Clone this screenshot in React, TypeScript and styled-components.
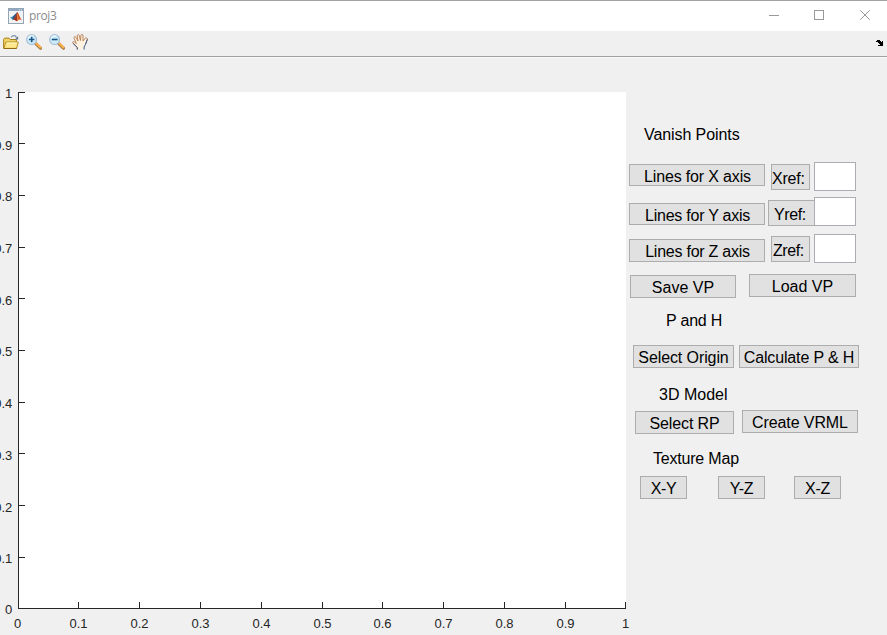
import React from 'react';
import styled, { createGlobalStyle } from 'styled-components';

const Global = createGlobalStyle`
  * { box-sizing: border-box; }
  html, body { margin: 0; padding: 0; background: #f0f0f0; overflow: hidden; }
`;

const Window = styled.div`
  width: 887px;
  height: 635px;
  display: flex;
  flex-direction: column;
  background: #f0f0f0;
  color: #000;
  font-family: "Liberation Sans", Arial, sans-serif;
  overflow: hidden;
`;

const TitleBar = styled.header`
  height: 31px;
  flex: none;
  display: flex;
  align-items: center;
  background: #fff;
  border-top: 1px solid #a3a3a3;
  padding-left: 8px;
`;

const Title = styled.span`
  margin-left: 5px;
  flex: 1;
  font: 12px/16px "Open Sans", "Noto Sans", sans-serif;
  letter-spacing: -0.4px;
  color: #8c8c8c;
`;

const Controls = styled.svg`
  width: 127px;
  height: 30px;
  display: block;
`;

const Toolbar = styled.nav`
  height: 27px;
  flex: none;
  display: flex;
  align-items: flex-start;
  padding: 3px 3px 0 3px;
  border-bottom: 1px solid #f9f9f9;
  box-shadow: inset 0 -1px 0 #a0a0a0;
`;

const ToolIcon = styled.svg<{ $gap?: number }>`
  width: 16px;
  height: 16px;
  display: block;
  flex: none;
  margin-right: ${p => p.$gap ?? 7}px;
`;

const DockIcon = styled.svg`
  width: 8px;
  height: 7px;
  display: block;
  margin: 6px 0 0 auto;
`;

const Body = styled.main`
  flex: 1;
  display: flex;
  min-height: 0;
`;

const Chart = styled.svg`
  width: 628px;
  height: 577px;
  flex: none;
  display: block;
  overflow: visible;
  font: 13px "Liberation Sans", Arial, sans-serif;
`;

const Panel = styled.section`
  flex: 1;
  display: flex;
  flex-direction: column;
`;

const Row = styled.div<{ $h: number; $indent: number; $top?: number }>`
  display: flex;
  flex: none;
  align-items: flex-start;
  height: ${p => p.$h}px;
  margin-top: ${p => p.$top ?? 0}px;
  padding-left: ${p => p.$indent}px;
`;

const Heading = styled.h2<{ $w: number; $indent: number; $top: number; $track?: number }>`
  margin: ${p => p.$top}px 0 0 ${p => p.$indent}px;
  width: ${p => p.$w}px;
  flex: none;
  font-size: 16px;
  line-height: 18px;
  font-weight: 400;
  letter-spacing: ${p => p.$track ?? 0}px;
  white-space: nowrap;
`;

const Push = styled.button<{ $w: number; $h?: number; $gap?: number; $drop?: number; $track?: number; $nudge?: number }>`
  width: ${p => p.$w}px;
  height: ${p => p.$h ?? 23}px;
  flex: none;
  display: flex;
  justify-content: center;
  align-items: flex-start;
  margin: ${p => p.$drop ?? 0}px 0 0 ${p => p.$gap ?? 0}px;
  padding: 3px 0 0 ${p => p.$nudge ?? 0}px;
  border: 1px solid #adadad;
  border-radius: 0;
  background: #e1e1e1;
  color: #000;
  font: 16px/18px "Liberation Sans", Arial, sans-serif;
  letter-spacing: ${p => p.$track ?? 0}px;
  white-space: nowrap;
`;

const RefLabel = styled(Push)`
  height: 26px;
  justify-content: flex-start;
  padding-top: 5px;
`;

const Field = styled.input<{ $gap?: number }>`
  width: 42px;
  height: 29px;
  flex: none;
  margin: 0 0 0 ${p => p.$gap ?? 4}px;
  padding: 0 4px;
  border: 1px solid #abadb3;
  border-radius: 0;
  background: #fff;
  font: 16px "Liberation Sans", Arial, sans-serif;
  outline: none;
`;

const X_TICKS = [18, 78, 139, 200, 261, 322, 382, 443, 504, 565, 625];
const Y_TICKS = [608, 557, 505, 453, 402, 350, 298, 247, 195, 143, 92];
const Y_BASELINES = [614, 563, 512, 460, 408, 356, 305, 253, 201, 150, 98];
const LABELS = ['0', '0.1', '0.2', '0.3', '0.4', '0.5', '0.6', '0.7', '0.8', '0.9', '1'];

function Axes() {
  return (
    <Chart viewBox="0 58 628 577">
      <rect x="18" y="92" width="608" height="517" fill="#fff" />
      <g stroke="#262626" strokeWidth="1" fill="none" shapeRendering="crispEdges">
        <path d="M18.5 92V609M18 608.5H626" />
        {X_TICKS.map(x => <path key={x} d={`M${x + 0.5} 602V608`} />)}
        {Y_TICKS.map(y => <path key={y} d={`M19 ${y + 0.5}H25`} />)}
      </g>
      <g fill="#262626">
        {LABELS.map((t, i) => (
          <text key={t} x={X_TICKS[i] + (i === 0 ? -0.5 : 0.5)} y="628" textAnchor="middle">{t}</text>
        ))}
        {LABELS.map((t, i) => (
          <text key={t} x="12.3" y={Y_BASELINES[i]} textAnchor="end">{t}</text>
        ))}
      </g>
    </Chart>
  );
}

function AppIcon() {
  return (
    <ToolIcon viewBox="0 0 16 16" $gap={0}>
      <rect x=".5" y=".5" width="15" height="15" fill="#f1f3f5" stroke="#96a5b4" />
      <path d="M1 1H15V3H1Z" fill="#8fa8c4" />
      <path d="M11 1.5h1v1h-1zM13 1.5h1v1h-1z" fill="#e6eef6" />
      <path d="M2 9.6 5.3 7.9 7.2 9 5 12Z" fill="#4aa0c5" />
      <path d="M5.3 7.9 9.3 4 7.6 9.5 5 12 4.2 10.8Z" fill="#315784" />
      <path d="M9.3 4C10.6 4.8 11.7 9.8 14 12.4 12.1 11 11 11.2 9.4 13 8.1 13.8 7.7 11.3 5 12 7 10.4 8.2 7.3 9.3 4Z" fill="#d44c23" />
      <path d="M9.3 4C9.9 7 10.1 9.5 9.4 13 8.1 13.8 7.7 11.3 5 12 7 10.4 8.2 7.3 9.3 4Z" fill="#9e3028" />
      <path d="M9.4 5C10 7 10.3 9 10.5 11.4L9.4 13 9.1 8Z" fill="#f39b35" />
    </ToolIcon>
  );
}

function FolderIcon() {
  return (
    <ToolIcon viewBox="0 0 16 16">
      <path d="M.6 14.3V5.2L1.7 4.1H6L7.2 5.5H13.3V8" fill="#f0d36b" stroke="#a88018" />
      <path d="M.8 14.4 2.9 8H15.3L13.6 14.4Z" fill="#ffe889" stroke="#b68a20" strokeLinejoin="round" />
      <path d="M3.6 9H14.2" stroke="#fff8c7" />
      <path d="M.8 14.5H13.5" stroke="#8d6811" />
      <path d="M8.2 3.4C9.5 1 12.6 1 13.6 3.6" fill="none" stroke="#7d93aa" strokeWidth="1.2" />
      <path d="M15.1 2.2V5.5H11.8Z" fill="#5d7894" />
    </ToolIcon>
  );
}

function Magnifier({ plus }: { plus?: boolean }) {
  return (
    <ToolIcon viewBox="0 0 16 16">
      <path d="m9.8 9.6 4.7 4.6" stroke="#a97b45" strokeWidth="3.2" strokeLinecap="round" />
      <path d="m10 9.2 4.5 4.3" stroke="#ffb54f" strokeWidth="1.8" strokeLinecap="round" />
      <circle cx="5.6" cy="5.6" r="4.9" fill="#ccecfa" stroke="#a5bfd8" strokeWidth="1.2" />
      <path d="M2.2 4.2C3 2 5.5 1.3 7.6 2" stroke="#f2fcff" strokeWidth="1.2" fill="none" />
      <path d={plus ? 'M3 5.5H8.4M5.7 2.8V8.2' : 'M2.8 5.5H8.6'} stroke="#1d5488" strokeWidth="1.6" fill="none" />
    </ToolIcon>
  );
}

function HandIcon() {
  return (
    <ToolIcon viewBox="0 0 16 16">
      <path
        d="M5.3 15.5V13.5L1.1 9.4C-.1 8 1.1 7.1 2.3 8L4.3 9.6 2 4C1.6 2.6 3.2 1.9 4 3.3L6 7 5.2 2C5.1.5 7 .2 7.4 1.7L8.4 6.5 8.9 1.8C9-.1 11-.1 11 1.8L11 7 12.8 4.7C13.6 3.3 15.8 3.7 15.4 5.3L13.6 10.2 12.1 13V15.5Z"
        fill="#fff1df"
      />
      <path
        d="M5.3 15.5V13.5L1.1 9.4C-.1 8 1.1 7.1 2.3 8L4.3 9.6 2 4C1.6 2.6 3.2 1.9 4 3.3L6 7 5.2 2C5.1.5 7 .2 7.4 1.7L8.4 6.5 8.9 1.8C9-.1 11-.1 11 1.8L11 7 12.8 4.7C13.6 3.3 15.8 3.7 15.4 5.3L13.6 10.2"
        fill="none" stroke="#b67d50" strokeWidth=".9"
      />
      <path d="M5.3 15.5V13.5L1.1 9.4M15.4 5.3 13.6 10.2 12.1 13V15.5" fill="none" stroke="#3c598d" />
    </ToolIcon>
  );
}

export default function App() {
  return (
    <Window>
      <Global />
      <TitleBar>
        <AppIcon />
        <Title>proj3</Title>
        <Controls viewBox="760 1 127 30" fill="none" stroke="#999">
          <path d="M769 15.5H779" />
          <rect x="814.5" y="10.5" width="9" height="9" />
          <path d="m860.3 10.3 9.4 9.4M869.7 10.3l-9.4 9.4" />
        </Controls>
      </TitleBar>
      <Toolbar>
        <FolderIcon />
        <Magnifier plus />
        <Magnifier />
        <HandIcon />
        <DockIcon viewBox="0 0 8 7" shapeRendering="crispEdges">
          <path d="M0 1h1v1H0zM1 0h3v1h1v1h1V1h1v5H2V5h2V4H3V3H2V2H1z" fill="#000" />
        </DockIcon>
      </Toolbar>
      <Body>
        <Axes />
        <Panel>
          <Heading $top={68} $indent={16} $w={110} $track={-0.08}>Vanish Points</Heading>
          <Row $top={18} $h={35} $indent={1}>
            <Push $w={136} $h={22} $drop={2} $track={-0.16} $nudge={1}>Lines for X axis</Push>
            <RefLabel $w={39} $gap={6} $drop={2} $track={-0.2}>Xref:</RefLabel>
            <Field aria-label="X reference" />
          </Row>
          <Row $h={37} $indent={1}>
            <Push $w={136} $h={22} $drop={6} $track={-0.24} $nudge={1}>Lines for Y axis</Push>
            <RefLabel $w={47} $gap={3} $drop={3} $nudge={5} $track={-0.4}>Yref:</RefLabel>
            <Field aria-label="Y reference" $gap={-1} />
          </Row>
          <Row $h={40} $indent={1}>
            <Push $w={136} $drop={5} $track={-0.24} $nudge={1}>Lines for Z axis</Push>
            <RefLabel $w={39} $gap={6} $drop={2} $nudge={1} $track={-0.4}>Zref:</RefLabel>
            <Field aria-label="Z reference" />
          </Row>
          <Row $h={24} $indent={2}>
            <Push $w={106} $drop={1}>Save VP</Push>
            <Push $w={107} $gap={13}>Load VP</Push>
          </Row>
          <Heading $top={14} $indent={38} $w={80} $track={-0.2}>P and H</Heading>
          <Row $top={15} $h={23} $indent={5}>
            <Push $w={101} $track={-0.1}>Select Origin</Push>
            <Push $w={120} $gap={5} $track={-0.15}>Calculate P &amp; H</Push>
          </Row>
          <Heading $top={18} $indent={31} $w={90}>3D Model</Heading>
          <Row $top={6} $h={24} $indent={7}>
            <Push $w={99} $drop={1} $track={-0.1}>Select RP</Push>
            <Push $w={116} $gap={8} $track={-0.1}>Create VRML</Push>
          </Row>
          <Heading $top={16} $indent={25} $w={110} $track={-0.2}>Texture Map</Heading>
          <Row $top={8} $h={23} $indent={12}>
            <Push $w={47} $track={-0.4}>X-Y</Push>
            <Push $w={47} $gap={31} $track={-0.3}>Y-Z</Push>
            <Push $w={47} $gap={29} $track={-0.3}>X-Z</Push>
          </Row>
        </Panel>
      </Body>
    </Window>
  );
}
